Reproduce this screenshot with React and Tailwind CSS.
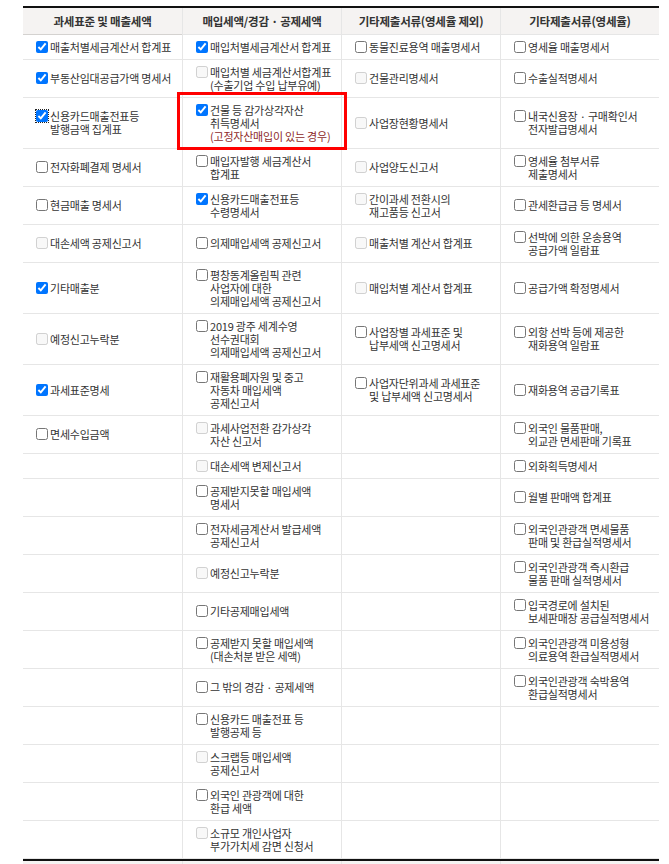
import React from 'react';

const C = 'checked';
const U = 'unchecked';
const D = 'disabled';

const headers = [
  '과세표준 및 매출세액',
  '매입세액/경감 · 공제세액',
  '기타제출서류(영세율 제외)',
  '기타제출서류(영세율)',
];

// each row: four cells, null = empty
const rows = [
  [
    { s: C, t: ['매출처별세금계산서 합계표'] },
    { s: C, t: ['매입처별세금계산서 합계표'] },
    { s: U, t: ['동물진료용역 매출명세서'] },
    { s: U, t: ['영세율 매출명세서'] },
  ],
  [
    { s: C, t: ['부동산임대공급가액 명세서'] },
    { s: D, t: ['매입처별 세금계산서합계표', '(수출기업 수입 납부유예)'] },
    { s: D, t: ['건물관리명세서'] },
    { s: U, t: ['수출실적명세서'] },
  ],
  [
    { s: C, t: ['신용카드매출전표등', '발행금액 집계표'], focus: true },
    { s: C, t: ['건물 등 감가상각자산', '취득명세서'], note: '(고정자산매입이 있는 경우)', mark: true },
    { s: D, t: ['사업장현황명세서'] },
    { s: U, t: ['내국신용장 · 구매확인서', '전자발급명세서'] },
  ],
  [
    { s: U, t: ['전자화폐결제 명세서'] },
    { s: U, t: ['매입자발행 세금계산서', '합계표'] },
    { s: D, t: ['사업양도신고서'] },
    { s: U, t: ['영세율 첨부서류', '제출명세서'] },
  ],
  [
    { s: U, t: ['현금매출 명세서'] },
    { s: C, t: ['신용카드매출전표등', '수령명세서'] },
    { s: D, t: ['간이과세 전환시의', '재고품등 신고서'] },
    { s: U, t: ['관세환급금 등 명세서'] },
  ],
  [
    { s: D, t: ['대손세액 공제신고서'] },
    { s: U, t: ['의제매입세액 공제신고서'] },
    { s: D, t: ['매출처별 계산서 합계표'] },
    { s: U, t: ['선박에 의한 운송용역', '공급가액 일람표'] },
  ],
  [
    { s: C, t: ['기타매출분'] },
    { s: U, t: ['평창동계올림픽 관련', '사업자에 대한', '의제매입세액 공제신고서'] },
    { s: D, t: ['매입처별 계산서 합계표'] },
    { s: U, t: ['공급가액 확정명세서'] },
  ],
  [
    { s: D, t: ['예정신고누락분'] },
    { s: U, t: ['2019 광주 세계수영', '선수권대회', '의제매입세액 공제신고서'] },
    { s: U, t: ['사업장별 과세표준 및', '납부세액 신고명세서'] },
    { s: U, t: ['외항 선박 등에 제공한', '재화용역 일람표'] },
  ],
  [
    { s: C, t: ['과세표준명세'] },
    { s: U, t: ['재활용폐자원 및 중고', '자동차 매입세액', '공제신고서'] },
    { s: U, t: ['사업자단위과세 과세표준', '및 납부세액 신고명세서'] },
    { s: U, t: ['재화용역 공급기록표'] },
  ],
  [
    { s: U, t: ['면세수입금액'] },
    { s: D, t: ['과세사업전환 감가상각', '자산 신고서'] },
    null,
    { s: U, t: ['외국인 물품판매,', '외교관 면세판매 기록표'] },
  ],
  [null, { s: D, t: ['대손세액 변제신고서'] }, null, { s: U, t: ['외화획득명세서'] }],
  [null, { s: U, t: ['공제받지못할 매입세액', '명세서'] }, null, { s: U, t: ['월별 판매액 합계표'] }],
  [
    null,
    { s: U, t: ['전자세금계산서 발급세액', '공제신고서'] },
    null,
    { s: U, t: ['외국인관광객 면세물품', '판매 및 환급실적명세서'] },
  ],
  [
    null,
    { s: D, t: ['예정신고누락분'] },
    null,
    { s: U, t: ['외국인관광객 즉시환급', '물품 판매 실적명세서'] },
  ],
  [
    null,
    { s: U, t: ['기타공제매입세액'] },
    null,
    { s: U, t: ['입국경로에 설치된', '보세판매장 공급실적명세서'] },
  ],
  [
    null,
    { s: U, t: ['공제받지 못할 매입세액', '(대손처분 받은 세액)'] },
    null,
    { s: U, t: ['외국인관광객 미용성형', '의료용역 환급실적명세서'] },
  ],
  [
    null,
    { s: U, t: ['그 밖의 경감 · 공제세액'] },
    null,
    { s: U, t: ['외국인관광객 숙박용역', '환급실적명세서'] },
  ],
  [null, { s: U, t: ['신용카드 매출전표 등', '발행공제 등'] }, null, null],
  [null, { s: D, t: ['스크랩등 매입세액', '공제신고서'] }, null, null],
  [null, { s: U, t: ['외국인 관광객에 대한', '환급 세액'] }, null, null],
  [null, { s: D, t: ['소규모 개인사업자', '부가가치세 감면 신청서'] }, null, null],
];

function Cell({ cell, col }) {
  const edge = col > 0 ? 'border-l border-[#e6e6e6]' : '';
  return (
    <div className={`relative flex items-center border-b border-[#e6e6e6] py-[5.5px] pl-[13px] pr-1 ${edge}`}>
      {cell && (
        <label className="flex items-start gap-[2px]">
          <input
            type="checkbox"
            readOnly
            checked={cell.s === C}
            disabled={cell.s === D}
            className={`m-0 h-[12px] w-[12px] shrink-0 ${cell.focus ? 'outline-1 outline-dotted outline-[#222] outline-offset-0' : ''}`}
          />
          <span className="block">
            {cell.t.map((line) => (
              <span key={line} className="block whitespace-nowrap">{line}</span>
            ))}
            {cell.note && <span className="block whitespace-nowrap text-[#8e2a2a]">{cell.note}</span>}
          </span>
        </label>
      )}
      {cell && cell.mark && (
        <div className="pointer-events-none absolute -left-[6px] -right-[6px] -top-[6px] -bottom-[2px] z-10 border-[3px] border-[#ff0000]" />
      )}
    </div>
  );
}

export default function App() {
  return (
    <div
      className="min-h-[864px] bg-white pt-[6px] pl-[23px] text-[11px] leading-[13px] tracking-[-0.02em] text-[#333]"
      style={{ fontFamily: '"Noto Sans CJK KR", "Noto Sans", sans-serif' }}
    >
      <div className="w-[636px] border-t-2 border-[#111]">
        {/* Header */}
        <div className="grid grid-cols-4 bg-[#f5f3f2]">
          {headers.map((h, i) => (
            <div
              key={h}
              className={`flex h-[27px] items-center justify-center border-b border-[#d4d2d0] text-[11.5px] font-bold text-[#333] ${i > 0 ? 'border-l border-[#e6e6e6]' : ''}`}
            >
              {h}
            </div>
          ))}
        </div>

        {/* Body */}
        <div className="grid grid-cols-4">
          {rows.map((row, r) =>
            row.map((cell, c) => <Cell key={`${r}-${c}`} cell={cell} col={c} />)
          )}
        </div>

        {/* Bottom bar */}
        <div className="grid grid-cols-4 border-t-2 border-[#111] bg-[#f5f3f2]">
          {[0, 1, 2, 3].map((i) => (
            <div key={i} className={`h-[10px] ${i > 0 ? 'border-l border-[#e6e6e6]' : ''}`} />
          ))}
        </div>
      </div>
    </div>
  );
}
